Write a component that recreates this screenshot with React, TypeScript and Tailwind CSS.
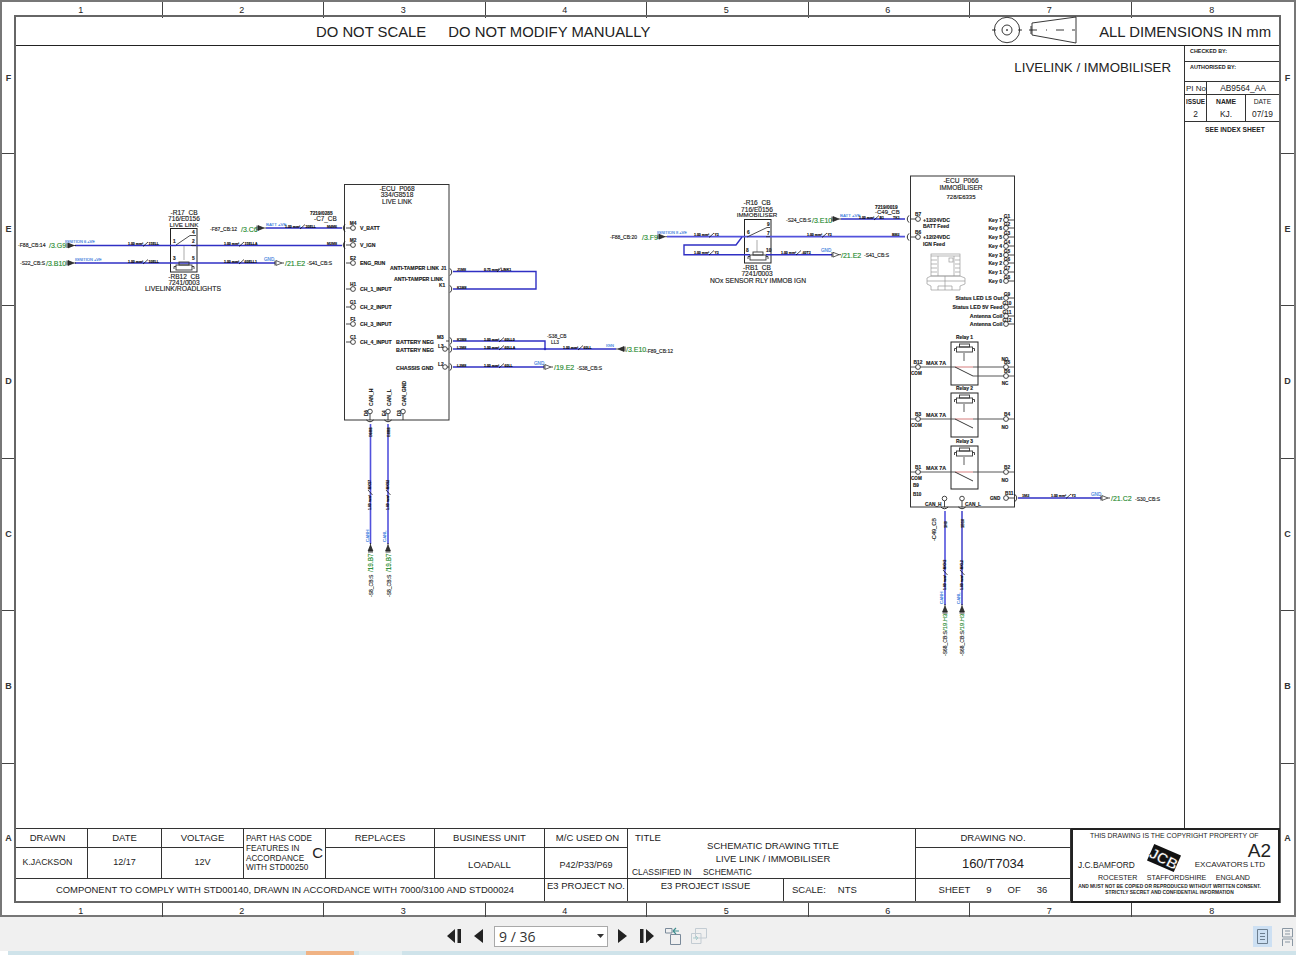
import type { ReactNode } from "react";

const INK = "#1a1a1a";
const WIRE = "#2f2fc4";
const WIRE_LIGHT = "#5252dc";
const LABEL = "#3f7fe0";
const GREEN = "#1f8a2e";

type TProps = {
  x: number;
  y: number;
  s?: number;
  c?: string;
  a?: "start" | "middle" | "end";
  b?: boolean;
  up?: boolean;
  children: ReactNode;
};

function T({ x, y, s = 5, c = INK, a = "start", b = false, up = false, children }: TProps) {
  return (
    <text
      x={x}
      y={y}
      fontSize={s}
      fill={c}
      stroke={c}
      strokeWidth={0.14}
      textAnchor={a}
      fontWeight={b ? 700 : 400}
      transform={up ? `rotate(-90 ${x} ${y})` : undefined}
    >
      {children}
    </text>
  );
}

// off-sheet arrow, the tip sits 9px along the given angle
function Arrow({ x, y, rot = 0, solid = false }: { x: number; y: number; rot?: number; solid?: boolean }) {
  return (
    <g transform={`translate(${x} ${y}) rotate(${rot})`}>
      <path d="M0 -2.5V2.5" stroke={INK} strokeWidth="0.8" />
      <path d="M1 -2.4L7 0L1 2.4Z" fill={solid ? "#333" : "#fff"} stroke={INK} strokeWidth="0.7" />
      <path d="M7 0H9" stroke={INK} strokeWidth="0.8" />
    </g>
  );
}

// wire size mark: size, slash, then the wire number
function Tick({ x, y, no, up = false }: { x: number; y: number; no: string; up?: boolean }) {
  return (
    <g transform={up ? `rotate(-90 ${x} ${y})` : undefined}>
      <text x={x} y={y} fontSize="3.5" fontWeight={700} fill="#000" stroke="#000" strokeWidth="0.12">1.00 mm²</text>
      <path d={`M${x + 15} ${y + 1.5}L${x + 20} ${y - 3}`} stroke="#000" strokeWidth="0.7" />
      <text x={x + 20.5} y={y} fontSize="3.5" fontWeight={700} fill="#000" stroke="#000" strokeWidth="0.12">{no}</text>
    </g>
  );
}

function Wire({ d, light = false, w = 1.4 }: { d: string; light?: boolean; w?: number }) {
  return <path d={d} fill="none" stroke={light ? WIRE_LIGHT : WIRE} strokeWidth={w} />;
}

function Pin({ x, y, to, name, nx, ny }: { x: number; y: number; to: number; name: string; nx?: number; ny?: number }) {
  return (
    <g>
      <path d={`M${to} ${y}H${x}`} stroke={INK} strokeWidth="0.8" />
      <circle cx={x} cy={y} r="2.4" fill="#fff" stroke={INK} strokeWidth="0.8" />
      <T x={nx ?? x} y={ny ?? y - 3} s={4.8} a="middle" b>{name}</T>
    </g>
  );
}

function Conn({ x, y, flip = false }: { x: number; y: number; flip?: boolean }) {
  const dx = flip ? 3.5 : -3.5;
  return <path d={`M${x} ${y - 3.6}Q${x + dx} ${y} ${x} ${y + 3.6}`} fill="none" stroke={INK} strokeWidth="0.9" />;
}

function ConnDown({ x, y }: { x: number; y: number }) {
  return <path d={`M${x - 3.6} ${y}Q${x} ${y + 3.5} ${x + 3.6} ${y}`} fill="none" stroke={INK} strokeWidth="0.9" />;
}

function Coil({ x, y }: { x: number; y: number }) {
  return (
    <g fill="none" stroke="#333" strokeWidth="0.9">
      <rect x={x + 4} y={y} width={10} height={3} />
      <rect x={x + 1} y={y + 3} width={16} height={5} />
      <path d={`M${x + 1} ${y + 4.5}H${x - 1}V${y + 7}M${x + 17} ${y + 4.5}H${x + 19}V${y + 7}`} />
    </g>
  );
}

function LiveLinkRelay() {
  return (
    <g>
      <rect x="170.5" y="228.5" width="26.5" height="43.5" fill="#fff" stroke="#222" strokeWidth="1" />
      <Wire d="M75 245.5H342" />
      <Wire d="M75 263H275" />
      <rect x="176" y="246.5" width="16" height="13" fill="#fff" />
      <rect x="172" y="240" width="22" height="3" fill="#fff" />
      <path d="M176 245L190 235.5H196M191 245.5H196" stroke="#222" strokeWidth="0.8" fill="none" />
      <path d="M184 246V260" stroke="#888" strokeWidth="0.7" />
      <Coil x={175} y={262} />
      <T x={173} y={243} s={4.8} b>1</T>
      <T x={192} y={234} s={4.8} b>4</T>
      <T x={192} y={243} s={4.8} b>2</T>
      <T x={173} y={260} s={4.8} b>3</T>
      <T x={192} y={260} s={4.8} b>5</T>
      <T x={184} y={215} s={6.6} a="middle">-R17_CB</T>
      <T x={184} y={221} s={6.6} a="middle">716/E0156</T>
      <T x={184} y={226.5} s={6.2} a="middle">LIVE LINK</T>
      <T x={184} y={279} s={6.6} a="middle">-RB12_CB</T>
      <T x={184} y={285} s={6.6} a="middle">7241/0003</T>
      <T x={183} y={291} s={6.8} a="middle">LIVELINK/ROADLIGHTS</T>

      <T x={18} y={247} s={5.1}>-F88_CB:14</T>
      <T x={49} y={248} s={7} c={GREEN}>/3.G9</T>
      <Arrow x={67} y={245.5} solid />
      <T x={65} y={243} s={4} c={LABEL}>IGNITION 6 +VE</T>
      <Tick x={128} y={245} no="15ELL" />
      <Tick x={224} y={245} no="15ELLA" />

      <T x={20} y={265} s={5}>-S22_CB:S</T>
      <T x={46} y={266} s={7} c={GREEN}>/3.B10</T>
      <Arrow x={67} y={263} solid />
      <T x={75} y={260.5} s={4} c={LABEL}>IGNITION +VE</T>
      <Tick x={128} y={262.5} no="10ELL" />
      <Tick x={224} y={262.5} no="60ELL1" />
      <T x={264} y={261} s={4.6} c={LABEL}>GND</T>
      <Arrow x={275} y={263} />
      <T x={285} y={266} s={7} c={GREEN}>/21.E2</T>
      <T x={307} y={265} s={5}>-S41_CB:S</T>

      <T x={210} y={231} s={5}>-F87_CB:12</T>
      <T x={241} y={231.5} s={7} c={GREEN}>/3.C6</T>
      <Arrow x={257} y={228} solid />
      <Wire d="M266 228H342" />
      <T x={266} y={225.5} s={4.4} c={LABEL}>BATT +VE</T>
      <Tick x={285} y={227.5} no="30ELL" />
      <T x={310} y={215} s={4.8} b>7219/0285</T>
      <T x={314} y={221} s={6.4}>-C7_CB</T>
      <T x={327} y={227.5} s={3.6} b>M4M6</T>
      <T x={327} y={245} s={3.6} b>M2M8</T>
    </g>
  );
}

function LiveLinkEcu() {
  const left: [string, number, string][] = [
    ["M4", 228, "V_BATT"],
    ["M2", 245, "V_IGN"],
    ["E2", 263, "ENG_RUN"],
    ["H1", 289, "CH_1_INPUT"],
    ["G1", 307, "CH_2_INPUT"],
    ["F1", 324, "CH_3_INPUT"],
    ["C1", 342, "CH_4_INPUT"],
  ];
  return (
    <g>
      <rect x="344.5" y="184.5" width="104.5" height="235.5" fill="#fff" stroke="#333" strokeWidth="1" />
      <T x={397} y={190.5} s={6.6} a="middle">-ECU_P068</T>
      <T x={397} y={197} s={6.6} a="middle">334/G8518</T>
      <T x={397} y={203.5} s={6.4} a="middle">LIVE LINK</T>
      {left.map(([name, y, label]) => (
        <g key={name}>
          <Pin x={353} y={y} to={346} name={name} />
          <T x={360} y={y + 2} s={5.2} b>{label}</T>
        </g>
      ))}
      <Conn x={345} y={228} />
      <Conn x={345} y={245} />

      <T x={390} y={270} s={5.2} b>ANTI-TAMPER LINK</T>
      <T x={441} y={270} s={4.8} b>J1</T>
      <T x={394} y={281} s={5.2} b>ANTI-TAMPER LINK</T>
      <T x={439} y={287} s={4.8} b>K1</T>
      <Conn x={450} y={272} flip />
      <Conn x={450} y={289} flip />
      <Conn x={450} y={341} flip />
      <Conn x={450} y={349} flip />
      <Conn x={450} y={367} flip />
      <Wire d="M453 271.5H536V289H453" />
      <T x={457} y={270.5} s={3.6} b>J1M8</T>
      <T x={457} y={288.5} s={3.6} b>K1M8</T>
      <text x={484} y={270.5} fontSize="3.5" fontWeight={700} stroke="#000" strokeWidth="0.12">0.75 mm²</text>
      <path d="M497 272L501 267.5" stroke="#000" strokeWidth="0.7" />
      <text x={501} y={270.5} fontSize="3.5" fontWeight={700} stroke="#000" strokeWidth="0.12">LINK1</text>

      <T x={396} y={344} s={5.4} b>BATTERY NEG</T>
      <T x={396} y={352} s={5.4} b>BATTERY NEG</T>
      <T x={396} y={370} s={5.4} b>CHASSIS GND</T>
      <T x={437} y={339} s={4.8} b>M3</T>
      <T x={438} y={348} s={4.8} b>L3</T>
      <T x={438} y={366} s={4.8} b>L2</T>
      <path d="M446 341H449M446 349H449M446 367H449" stroke={INK} strokeWidth="0.8" />
      <circle cx="445" cy="349" r="2.3" fill="#fff" stroke={INK} strokeWidth="0.8" />
      <circle cx="445" cy="367" r="2.3" fill="#fff" stroke={INK} strokeWidth="0.8" />

      <Wire d="M453 341H545V349" />
      <Wire d="M453 349H616" />
      <Wire d="M453 367H544" />
      <circle cx="545" cy="349" r="1.2" fill={WIRE} />
      <T x={457} y={340.5} s={3.6} b>K3M8</T>
      <T x={457} y={348.5} s={3.6} b>L3M8</T>
      <T x={457} y={366.5} s={3.6} b>L2M8</T>
      <Tick x={484} y={340.5} no="60LL0" />
      <Tick x={484} y={348.5} no="60LLA" />
      <Tick x={484} y={366.5} no="60LL" />
      <Tick x={563} y={348.5} no="60LL" />
      <T x={547} y={338} s={4.8}>-S38_CB</T>
      <T x={551} y={344} s={4.8}>LL3</T>
      <T x={606} y={347} s={4.4} c={LABEL}>IGN</T>
      <Arrow x={625} y={349} rot={180} solid />
      <T x={626} y={352} s={7} c={GREEN}>/3.E10</T>
      <T x={646} y={353} s={5}>-F89_CB:12</T>
      <T x={534} y={364.5} s={4.6} c={LABEL}>GND</T>
      <Arrow x={544} y={367} />
      <T x={554} y={370} s={7} c={GREEN}>/19.E2</T>
      <T x={577} y={370} s={5}>-S38_CB:S</T>

      {[370, 388, 403].map((x) => (
        <g key={x}>
          <path d={`M${x} 414V420`} stroke={INK} strokeWidth="0.8" />
          <circle cx={x} cy={411.5} r="2.3" fill="#fff" stroke={INK} strokeWidth="0.8" />
        </g>
      ))}
      <T x={368} y={416} s={4.6} up b>D6</T>
      <T x={386} y={416} s={4.6} up b>E4</T>
      <T x={401} y={416} s={4.6} up b>D3</T>
      <T x={373} y={406} s={5.1} up b>CAN_H</T>
      <T x={391} y={406} s={5.1} up b>CAN_L</T>
      <T x={406} y={406} s={5.1} up b>CAN_GND</T>
      <ConnDown x={370} y={420} />
      <ConnDown x={388} y={420} />

      <Wire d="M370.5 424V544" light w={1.6} />
      <Wire d="M388 424V544" light w={1.6} />
      <T x={372} y={437} s={3.6} up b>D6M8</T>
      <T x={390} y={437} s={3.6} up b>E4M8</T>
      <Tick x={371} y={510} no="MKS7" up />
      <Tick x={389} y={510} no="MKS2" up />
      <T x={369} y={542} s={4.4} c={LABEL} up>CANH</T>
      <T x={386} y={542} s={4.4} c={LABEL} up>CANL</T>
      <Arrow x={370.5} y={552} rot={-90} solid />
      <Arrow x={388} y={552} rot={-90} solid />
      <T x={373} y={572} s={6.4} c={GREEN} up>/19.B7</T>
      <T x={391} y={572} s={6.4} c={GREEN} up>/19.B7</T>
      <T x={373} y={597} s={5} up>-S8_CB:S</T>
      <T x={391} y={597} s={5} up>-S8_CB:S</T>
    </g>
  );
}

function ImmobRelay() {
  return (
    <g>
      <rect x="744.5" y="219.5" width="26.5" height="43.5" fill="#fff" stroke="#222" strokeWidth="1" />
      <Wire d="M667 236.7H905" light w={1.8} />
      <Wire d="M742 237L736 245H684V254.7H832" />
      <rect x="750" y="240" width="16" height="20" fill="#fff" />
      <path d="M747 237L767 227.5H770M766 236.7H770" stroke="#222" strokeWidth="0.8" fill="none" />
      <path d="M757 240V252" stroke="#888" strokeWidth="0.7" />
      <Coil x={749} y={252} />
      <T x={767} y={226} s={4.8} b>9</T>
      <T x={747} y={234} s={4.8} b>6</T>
      <T x={767} y={234.5} s={4.8} b>7</T>
      <T x={746} y={252} s={4.8} b>8</T>
      <T x={766} y={252} s={4.8} b>10</T>
      <T x={757} y={205} s={6.6} a="middle">-R16_CB</T>
      <T x={757} y={211.5} s={6.6} a="middle">716/E0156</T>
      <T x={757} y={217} s={6.2} a="middle">IMMOBILISER</T>
      <T x={757} y={270} s={6.6} a="middle">-RB1_CB</T>
      <T x={757} y={276} s={6.6} a="middle">7241/0003</T>
      <T x={758} y={283} s={6.7} a="middle">NOx SENSOR RLY IMMOB IGN</T>

      <T x={610} y={239} s={5}>-F88_CB:20</T>
      <T x={642} y={240} s={7} c={GREEN}>/3.F9</T>
      <Arrow x={658} y={236.7} solid />
      <T x={657} y={234} s={4} c={LABEL}>IGNITION 8 +VE</T>
      <Tick x={694} y={236} no="Y3" />
      <Tick x={694} y={253.5} no="Y3" />
      <Tick x={807} y={236} no="Y3" />
      <Tick x={781} y={253.5} no="-60T3" />
      <T x={892} y={236} s={3.6} b>BM2</T>
      <T x={821} y={252} s={4.6} c={LABEL}>GND</T>
      <Arrow x={832} y={254.7} />
      <T x={841} y={258} s={7} c={GREEN}>/21.E2</T>
      <T x={864} y={257} s={5}>-S41_CB:S</T>

      <T x={786} y={222} s={5}>-S24_CB:S</T>
      <T x={812} y={222.5} s={7} c={GREEN}>/3.E10</T>
      <Arrow x={832} y={219} solid />
      <Wire d="M841 219H905" />
      <T x={840} y={217} s={4.4} c={LABEL}>BATT +VE</T>
      <Tick x={859} y={218.5} no="B1" />
      <T x={875} y={209} s={4.8} b>7219/0019</T>
      <T x={875} y={214} s={6}>-C49_CB</T>
      <T x={893} y={218.5} s={3.6} b>TK1</T>
    </g>
  );
}

function Relay({ n, top, h, line, b1, b2, no = "NO" }: { n: number; top: number; h: number; line: number; b1: string; b2: string; no?: string }) {
  return (
    <g>
      <T x={964.5} y={top - 3.5} s={4.9} a="middle" b>{`Relay ${n}`}</T>
      <rect x="951" y={top} width="27" height={h} fill="#fff" stroke="#222" strokeWidth="1" />
      <Coil x={955.5} y={top + 2} />
      <path d={`M964 ${top + 11}V${top + 19}`} stroke="#333" strokeWidth="0.8" />
      <path d={`M911 ${line}H955M973 ${line}H1014`} stroke="#444" strokeWidth="0.9" />
      <path d={`M955 ${line}H973`} stroke="#c95a5a" strokeWidth="0.8" />
      <path d={`M955 ${line}L973 ${line + 9}`} stroke="#222" strokeWidth="0.9" />
      <circle cx="918" cy={line} r="2.4" fill="#fff" stroke={INK} strokeWidth="0.8" />
      <circle cx="1006" cy={line} r="2.4" fill="#fff" stroke={INK} strokeWidth="0.8" />
      <T x={918} y={line - 3} s={4.8} a="middle" b>{b1}</T>
      <T x={1007} y={line - 3} s={4.8} a="middle" b>{b2}</T>
      <T x={926} y={line - 2} s={5.3} b>MAX 7A</T>
      <T x={911} y={line + 8} s={4.6} b>COM</T>
      {no && <T x={1005} y={line + 10} s={4.6} a="middle" b>{no}</T>}
    </g>
  );
}

function ImmobEcu() {
  const keys = [220, 228, 237, 246, 255, 263, 272, 281];
  const lower: [string, number, string][] = [
    ["G9", 298, "Status LED LS Out"],
    ["G10", 307, "Status LED 5V Feed"],
    ["G11", 316, "Antenna Coil"],
    ["G12", 324, "Antenna Coil"],
  ];
  return (
    <g>
      <rect x="910.5" y="176" width="104" height="331" fill="#fff" stroke="#333" strokeWidth="1" />
      <T x={961} y={183} s={6.6} a="middle">-ECU_P066</T>
      <T x={961} y={190} s={6.6} a="middle">IMMOBILISER</T>
      <T x={961} y={199} s={6} a="middle">728/E6335</T>

      <Pin x={918} y={219} to={911} name="B7" />
      <Pin x={918} y={237} to={911} name="B6" />
      <Conn x={909} y={219} />
      <Conn x={909} y={237} />
      <T x={923} y={222} s={5.2} b>+12/24VDC</T>
      <T x={923} y={228} s={5} b>BATT Feed</T>
      <T x={923} y={239} s={5.2} b>+12/24VDC</T>
      <T x={923} y={246} s={5} b>IGN Feed</T>

      {keys.map((y, i) => (
        <g key={y}>
          <Pin x={1006} y={y} to={1014} name={`G${i + 1}`} nx={1007} ny={y - 2.5} />
          <T x={1002} y={y + 2} s={5.1} a="end" b>{`Key ${7 - i}`}</T>
        </g>
      ))}
      {lower.map(([name, y, label]) => (
        <g key={name}>
          <Pin x={1006} y={y} to={1014} name={name} nx={1007} ny={y - 2.5} />
          <T x={1002.5} y={y + 2} s={5.3} a="end" b>{label}</T>
        </g>
      ))}

      {/* connector housing sketch */}
      <g fill="none" stroke="#9a9a9a" strokeWidth="0.7">
        <rect x="931" y="254" width="29" height="22" />
        <path d="M931 256H960M938 256V276M954 256V276M945 276V290" />
        <path d="M931 260H937M931 264H937M931 268H937M931 272H937M955 260H960M955 264H960M955 268H960M955 272H960" />
        <path d="M931 276L927 278V284L931 286V290H960V286L965 284V278L960 276Z" />
        <path d="M927 281H965M938 290V286H952V290" />
        <rect x="949" y="258" width="4" height="4" />
      </g>

      <Relay n={1} top={342} h={43} line={367} b1="B12" b2="B5" no="" />
      <path d="M973 376H1014" stroke="#444" strokeWidth="0.9" />
      <circle cx="1006" cy="376" r="2.4" fill="#fff" stroke={INK} strokeWidth="0.8" />
      <T x={1005} y={361} s={4.6} a="middle" b>NO</T>
      <T x={1007} y={373} s={4.8} a="middle" b>B6</T>
      <T x={1005} y={385} s={4.6} a="middle" b>NC</T>
      <Relay n={2} top={393} h={44} line={419} b1="B3" b2="B4" />
      <Relay n={3} top={446} h={43} line={472} b1="B1" b2="B2" />
      <T x={913} y={487} s={4.6} b>B9</T>
      <T x={913} y={496} s={4.6} b>B10</T>

      <circle cx="1006" cy="498" r="2.4" fill="#fff" stroke={INK} strokeWidth="0.8" />
      <path d="M1008 498H1014" stroke={INK} strokeWidth="0.8" />
      <T x={990} y={500} s={4.6} b>GND</T>
      <T x={1005} y={495} s={4.8} b>B11</T>
      <Conn x={1015} y={498} flip />
      <Wire d="M1018 498H1101" />
      <T x={1022} y={497} s={3.8} b>1M2</T>
      <Tick x={1051} y={497} no="Y3" />
      <T x={1091} y={495.5} s={4.6} c={LABEL}>GND</T>
      <Arrow x={1101} y={498} />
      <T x={1111} y={501} s={7} c={GREEN}>/21.C2</T>
      <T x={1135} y={501} s={5}>-S30_CB:S</T>

      {[944.5, 962].map((x) => (
        <g key={x}>
          <path d={`M${x} 501V507`} stroke={INK} strokeWidth="0.8" />
          <circle cx={x} cy={498.5} r="2.3" fill="#fff" stroke={INK} strokeWidth="0.8" />
          <ConnDown x={x} y={507} />
        </g>
      ))}
      <T x={925} y={506} s={4.8} b>CAN_H</T>
      <T x={965} y={506} s={4.8} b>CAN_L</T>

      <Wire d="M945 511V605" light w={1.6} />
      <Wire d="M962 511V605" />
      <T x={936} y={541} s={5.6} up>-C49_CB</T>
      <T x={947} y={528} s={3.8} up b>1H0</T>
      <T x={964} y={528} s={3.8} up b>1B10</T>
      <Tick x={946} y={590} no="MKH2" up />
      <Tick x={963} y={590} no="MKL2" up />
      <T x={943} y={604} s={4.4} c={LABEL} up>CANH</T>
      <T x={960} y={604} s={4.4} c={LABEL} up>CANL</T>
      <Arrow x={945} y={613} rot={-90} solid />
      <Arrow x={962} y={613} rot={-90} solid />
      <T x={947} y={631} s={5.9} c={GREEN} up>/19.H3</T>
      <T x={964} y={631} s={5.9} c={GREEN} up>/19.H3</T>
      <T x={947} y={656} s={5} up>-S68_CB:S</T>
      <T x={964} y={656} s={5} up>-S68_CB:S</T>
    </g>
  );
}

function SideLetters() {
  return (
    <div className="flex flex-col w-[13px] text-[9px] font-bold text-[#333] text-center">
      <div className="h-[139px] border-b border-[#444] flex items-center justify-center pb-[10px]">F</div>
      <div className="h-[152px] border-b border-[#444] flex items-center justify-center">E</div>
      <div className="h-[153px] border-b border-[#444] flex items-center justify-center">D</div>
      <div className="h-[152px] border-b border-[#444] flex items-center justify-center">C</div>
      <div className="h-[153px] border-b border-[#444] flex items-center justify-center">B</div>
      <div className="h-[139px] flex items-center justify-center pt-[10px]">A</div>
    </div>
  );
}

function Ruler({ className }: { className: string }) {
  const nums = [1, 2, 3, 4, 5, 6, 7, 8];
  return (
    <div className={`grid grid-cols-[160.5px_repeat(6,161.5px)_1fr] text-[9px] text-[#222] ${className}`}>
      {nums.map((n) => (
        <div key={n} className="flex items-center justify-center pt-[2px] pr-[2px] border-r border-[#444] last:border-r-0">{n}</div>
      ))}
    </div>
  );
}

function Cell({ className = "", children }: { className?: string; children?: ReactNode }) {
  return <div className={`border-r border-b border-[#333] flex items-center justify-center text-[#222] ${className}`}>{children}</div>;
}

function TitleBlock() {
  return (
    <div className="border-t border-[#333] h-[73px] grid grid-cols-[72px_74px_82px_82px_109px_110px_83px_156px_132px_155px_208px] grid-rows-[19px_31px_22px] text-[9.5px]">
      <Cell className="pr-[8px]">DRAWN</Cell>
      <Cell>DATE</Cell>
      <Cell>VOLTAGE</Cell>
      <Cell className="row-span-2 relative !justify-start pl-[2px] text-[8.2px] leading-[9.6px]">
        <div>PART HAS CODE<br />FEATURES IN<br />ACCORDANCE<br />WITH STD00250</div>
        <span className="absolute right-[2px] top-[19px] text-[15px]">C</span>
      </Cell>
      <Cell>REPLACES</Cell>
      <Cell>BUSINESS UNIT</Cell>
      <Cell className="pl-[3px]">M/C USED ON</Cell>
      <Cell className="col-span-2 row-span-2 relative !block">
        <div className="absolute left-[7px] top-[2px]">TITLE</div>
        <div className="absolute left-[60px] top-[11px] w-[170px] text-center leading-[12.5px] text-[9.5px] whitespace-nowrap">
          SCHEMATIC DRAWING TITLE<br />LIVE LINK / IMMOBILISER
        </div>
        <div className="absolute left-[4px] top-[37px] text-[8.4px]">CLASSIFIED IN</div>
        <div className="absolute left-[75px] top-[37px] text-[8.4px]">SCHEMATIC</div>
      </Cell>
      <Cell>DRAWING NO.</Cell>
      <div className="row-span-3 border-2 border-[#222] -mt-px -mr-px -mb-[2px] relative text-[#222] text-[8.2px]">
        <div className="absolute top-[1px] left-[17px] text-[6.9px] whitespace-nowrap">THIS DRAWING IS THE COPYRIGHT PROPERTY OF</div>
        <div className="absolute top-[10px] right-[7px] text-[19px] leading-[22px]">A2</div>
        <div className="absolute top-[29px] left-[5px] text-[8.4px]">J.C.BAMFORD</div>
        <svg className="absolute top-[14px] left-[73px]" width="36" height="28" viewBox="0 0 36 28">
          <g transform="rotate(27 18 14)">
            <path d="M3 6L32 4L33 22L4 24Z" fill="#111" />
            <text x="18" y="20" fontSize="15" fontWeight={700} fill="#fff" textAnchor="middle" stroke="#111" strokeWidth="0.4">JCB</text>
          </g>
        </svg>
        <div className="absolute top-[29px] right-[13px] text-[8.1px]">EXCAVATORS LTD</div>
        <div className="absolute top-[43px] left-[25px] right-[28px] flex justify-between text-[7.1px]">
          <span>ROCESTER</span>
          <span>STAFFORDSHIRE</span>
          <span>ENGLAND</span>
        </div>
        <div className="absolute top-[54px] left-0 right-[12px] text-center text-[4.85px] leading-[5.6px] font-bold">
          AND MUST NOT BE COPIED OR REPRODUCED WITHOUT WRITTEN CONSENT.<br />STRICTLY SECRET AND CONFIDENTIAL INFORMATION
        </div>
      </div>
      <Cell className="text-[8.8px] pr-[8px]">K.JACKSON</Cell>
      <Cell className="text-[9px]">12/17</Cell>
      <Cell className="text-[9px]">12V</Cell>
      <Cell></Cell>
      <Cell className="pt-[5px]">LOADALL</Cell>
      <Cell className="text-[9px] pt-[5px]">P42/P33/P69</Cell>
      <Cell className="text-[13px] pt-[2px]">160/T7034</Cell>
      <Cell className="col-span-6 !border-b-0 pl-[10px] text-[9.45px]">COMPONENT TO COMPLY WITH STD00140, DRAWN IN ACCORDANCE WITH 7000/3100 AND STD00024</Cell>
      <Cell className="!border-b-0 !items-start">E3 PROJECT NO.</Cell>
      <Cell className="!border-b-0 !items-start">E3 PROJECT ISSUE</Cell>
      <Cell className="!border-b-0 !justify-start pl-[8px] gap-[12px]">
        <span>SCALE:</span>
        <span>NTS</span>
      </Cell>
      <Cell className="!border-b-0 gap-[16px]">
        <span>SHEET</span>
        <span>9</span>
        <span>OF</span>
        <span>36</span>
      </Cell>
    </div>
  );
}

function RevisionColumn() {
  return (
    <div className="w-[95px] border-l border-[#333] flex flex-col text-[#222]">
      <div className="h-[16px] pl-[5px] pt-[1px] text-[5.4px] font-bold border-b border-[#333]">CHECKED BY:</div>
      <div className="h-[20px] pl-[5px] pt-[1px] text-[5.4px] font-bold border-b border-[#333]">AUTHORISED BY:</div>
      <div className="h-[13px] flex border-b border-[#333] text-[8.4px]">
        <div className="w-[22px] border-r border-[#333] pl-px leading-[13px] text-[8px] whitespace-nowrap">PI No</div>
        <div className="flex-1 text-center leading-[13px]">AB9564_AA</div>
      </div>
      <div className="h-[27px] flex border-b border-[#333] text-center leading-[13px]">
        <div className="w-[22px] border-r border-[#333] text-[6.4px]">
          <div className="font-bold">ISSUE</div>
          <div className="text-[8.4px]">2</div>
        </div>
        <div className="w-[39px] border-r border-[#333] text-[6.8px]">
          <div className="font-bold">NAME</div>
          <div className="text-[8.4px]">KJ.</div>
        </div>
        <div className="flex-1 text-[6.8px]">
          <div>DATE</div>
          <div className="text-[8.4px]">07/19</div>
        </div>
      </div>
      <div className="pt-[3px] pl-[20px] text-[6.7px] font-bold">SEE INDEX SHEET</div>
    </div>
  );
}

function ThirdAngle() {
  return (
    <svg width="86" height="30" viewBox="0 0 86 30" fill="none" stroke="#222" strokeWidth="0.9">
      <circle cx="16" cy="14" r="12.7" />
      <circle cx="16" cy="14" r="5" />
      <circle cx="16" cy="14" r="0.5" fill="#222" />
      <path d="M1 14H5M27 14H31" />
      <path d="M38 14H46M55 14H56M65 14H73M81 14H84M40 10V18" />
      <path d="M41 7L85 1V27L41 19Z" />
    </svg>
  );
}

function ToolIcon({ d, w = 14 }: { d: string; w?: number }) {
  return (
    <svg width={w} height="16" viewBox={`0 0 ${w} 16`} fill="#222">
      <path d={d} />
    </svg>
  );
}

function Toolbar() {
  return (
    <div className="relative h-[34px] bg-[#f0f0f0] flex items-center pt-[4px] pl-[447px]">
      <ToolIcon d="M8 1V15L0 8ZM10.5 1H14V15H10.5Z" />
      <div className="ml-[12px]"><ToolIcon w={11} d="M10 1V15L1 8Z" /></div>
      <div className="ml-[10px] w-[114px] h-[21px] bg-white border border-[#a9a9a9] flex items-center justify-between pl-[4px] pr-[3px] font-['Open_Sans',sans-serif] text-[14px] text-[#333]">
        <span>9 / 36</span>
        <svg width="7" height="4" viewBox="0 0 7 4" fill="#333"><path d="M0 0H7L3.5 4Z" /></svg>
      </div>
      <div className="ml-[9px]"><ToolIcon w={11} d="M1 1V15L10 8Z" /></div>
      <div className="ml-[12px]"><ToolIcon d="M0 1H3.5V15H0ZM6 1V15L14 8Z" /></div>
      <svg className="ml-[10px]" width="18" height="18" viewBox="0 0 18 18" fill="none" stroke="#7a8a9a">
        <path d="M1.5 1.5H8V6H1.5ZM6.5 7.5H16.5V17.5H6.5Z" />
        <path d="M15 4H9M9 4L12 1M9 4L12 7" stroke="#3f8f8f" strokeWidth="1.2" />
      </svg>
      <svg className="ml-[8px]" width="18" height="18" viewBox="0 0 18 18" fill="none" stroke="#c3ccd3">
        <path d="M5.5 1.5H16.5V11H5.5ZM1.5 6.5H11V16.5H1.5Z" />
        <path d="M3 11H8M8 11L6 9M8 11L6 13" stroke="#a9cdcd" />
      </svg>
      <div className="absolute left-[1253px] top-[9px] w-[19px] h-[21px] bg-[#cde0f3] flex items-center justify-center">
        <svg width="11" height="15" viewBox="0 0 11 15" fill="none" stroke="#6d7f90">
          <path d="M.5.5H10.5V14.5H.5ZM3 4.5H8M3 7.5H8M3 10.5H8" />
        </svg>
      </div>
      <svg className="absolute left-[1282px] top-[11px]" width="11" height="18" viewBox="0 0 11 18" fill="none" stroke="#8a97a3">
        <path d="M.5.5H10.5V9H.5ZM3 3H8M3 6H8M.5 11H10.5V18M.5 11V18M3 14H8" />
      </svg>
    </div>
  );
}

export default function App() {
  return (
    <div className="w-[1296px] h-[955px] overflow-hidden bg-white font-['Liberation_Sans',Arial,sans-serif]">
      <div className="h-[917px] border-2 border-[#777] flex flex-col">
        <Ruler className="h-[13px]" />
        <div className="flex h-[888px]">
          <div className="w-[12px] -mr-px"><SideLetters /></div>
          <div className="w-[1267px] ml-px border-2 border-[#666] flex flex-col">
            <div className="h-[29px] shrink-0 border-b border-[#222] flex items-center text-[14.85px] text-[#222] pl-[300px]">
              <span className="pt-[2px]">DO NOT SCALE</span>
              <span className="ml-[22px] pt-[2px]">DO NOT MODIFY MANUALLY</span>
              <div className="ml-auto flex items-center"><ThirdAngle /></div>
              <span className="ml-[22px] mr-[8px] pt-[2px]">ALL DIMENSIONS IN mm</span>
            </div>
            <div className="h-[782px] shrink-0 flex">
              <div className="relative w-[1168px]">
                <svg className="absolute inset-0" width="1168" height="782" viewBox="16 46 1168 782">
                  <LiveLinkRelay />
                  <LiveLinkEcu />
                  <ImmobRelay />
                  <ImmobEcu />
                </svg>
                <div className="relative pt-[12px] pr-[13px] text-right text-[13.3px] text-[#222]">LIVELINK / IMMOBILISER</div>
              </div>
              <RevisionColumn />
            </div>
            <TitleBlock />
          </div>
          <div className="w-[13px]"><SideLetters /></div>
        </div>
        <Ruler className="h-[12px]" />
      </div>
      <Toolbar />
      <div className="h-[4px] flex bg-[#cfe3ea]">
        <div className="w-[8px] bg-white" />
        <div className="w-[298px]" />
        <div className="w-[48px] bg-[#f0b384]" />
        <div className="w-[5px]" />
        <div className="w-[43px] bg-[#e4eff2]" />
      </div>
    </div>
  );
}
